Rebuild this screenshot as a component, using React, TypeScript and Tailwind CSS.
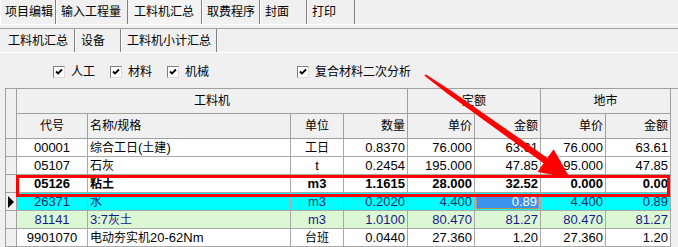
import React from "react";

const topTabs = [
  { t: "项目编辑", w: 56 },
  { t: "输入工程量", w: 72 },
  { t: "工料机汇总", w: 74, sel: true },
  { t: "取费程序", w: 58 },
  { t: "封面", w: 47 },
  { t: "打印", w: 48 },
];

const subTabs = [
  { t: "工料机汇总", w: 73, sel: true },
  { t: "设备", w: 46 },
  { t: "工料机小计汇总", w: 96 },
];

type Row = {
  code: string;
  name: string;
  unit: string;
  qty: string;
  dp: string;
  da: string;
  mp: string;
  ma: string;
  kind?: "bold" | "cyan" | "green";
};

const rows: Row[] = [
  { code: "00001", name: "综合工日(土建)", unit: "工日", qty: "0.8370", dp: "76.000", da: "63.61", mp: "76.000", ma: "63.61" },
  { code: "05107", name: "石灰", unit: "t", qty: "0.2454", dp: "195.000", da: "47.85", mp: "195.000", ma: "47.85" },
  { code: "05126", name: "粘土", unit: "m3", qty: "1.1615", dp: "28.000", da: "32.52", mp: "0.000", ma: "0.00", kind: "bold" },
  { code: "26371", name: "水", unit: "m3", qty: "0.2020", dp: "4.400", da: "0.89", mp: "4.400", ma: "0.89", kind: "cyan" },
  { code: "81141", name: "3:7灰土", unit: "m3", qty: "1.0100", dp: "80.470", da: "81.27", mp: "80.470", ma: "81.27", kind: "green" },
  { code: "9901070", name: "电动夯实机20-62Nm", unit: "台班", qty: "0.0440", dp: "27.360", da: "1.20", mp: "27.360", ma: "1.20" },
];

// CJK glyphs a bit smaller than the latin digits, like the old GDI font
function mix(s: string) {
  return s.split(/([\u4e00-\u9fff]+)/).map((p, i) =>
    /[\u4e00-\u9fff]/.test(p) ? (
      <span key={i} className="text-[12px]">
        {p}
      </span>
    ) : (
      <span key={i}>{p}</span>
    )
  );
}

function Check({ label, className = "" }: { label: string; className?: string }) {
  return (
    <div className={`flex items-center ${className}`}>
      <div className="w-[12px] h-[12px] bg-white border border-t-[#808080] border-l-[#808080] border-r-[#dcdcdc] border-b-[#dcdcdc] flex items-center justify-center">
        <svg width="8" height="8" viewBox="0 0 8 8">
          <path d="M1 3.5 L3 5.5 L7 1.5" stroke="#000" strokeWidth="1.8" fill="none" />
        </svg>
      </div>
      <span className="ml-[6px] text-[12px]">{label}</span>
    </div>
  );
}

function DataRow({ r }: { r: Row }) {
  const bg = r.kind === "cyan" ? "bg-[#00ffff]" : r.kind === "green" ? "bg-[#dcf7d4]" : "bg-white";
  const tc = r.kind === "cyan" ? "text-[#0c2a63]" : r.kind === "green" ? "text-[#1a1a8c]" : "text-black";
  const fw = r.kind === "bold" ? "font-bold" : "";
  const cell = `h-full border-r border-b border-[#a8a8a8] flex items-center ${bg}`;
  return (
    <div className={`flex h-[18px] ${tc} ${fw}`}>
      <div className="w-[11px] h-full border-r border-b border-[#a0a0a0] bg-[#f0f0f0] flex items-center">
        {r.kind === "cyan" && (
          <svg width="8" height="12" viewBox="0 0 8 12" className="ml-[1px]">
            <path d="M1 0 L7 6 L1 12 Z" fill="#000" />
          </svg>
        )}
      </div>
      <div className={`${cell} w-[71px] justify-center`}>{r.code}</div>
      <div className={`${cell} w-[203px] pl-[2px]`}>{mix(r.name)}</div>
      <div className={`${cell} w-[53px] justify-center`}>{mix(r.unit)}</div>
      <div className={`${cell} w-[64px] justify-end pr-[2px]`}>{r.qty}</div>
      <div className={`${cell} w-[67px] justify-end pr-[2px]`}>{r.dp}</div>
      {r.kind === "cyan" ? (
        <div className="h-full w-[66px] border-r border-b border-[#a8a8a8] bg-[#00ffff] p-[1px]">
          <div className="h-full w-full bg-[#3d92ec] border border-dotted border-[#d0a060] flex items-center justify-end pr-[1px] text-white">
            {r.da}
          </div>
        </div>
      ) : (
        <div className={`${cell} w-[66px] justify-end pr-[2px]`}>{r.da}</div>
      )}
      <div className={`${cell} w-[65px] justify-end pr-[2px]`}>{r.mp}</div>
      <div className={`${cell} w-[65px] justify-end pr-[2px]`}>{r.ma}</div>
      <div className="flex-1 h-full bg-[#f0f0f0]" />
    </div>
  );
}

export default function App() {
  const hd = "h-full border-r border-b border-[#a0a0a0] flex items-center bg-[#f0f0f0]";
  return (
    <div className="relative w-[678px] h-[247px] overflow-hidden bg-[#f0f0f0] text-[13px] text-black font-['Liberation_Sans','Noto_Sans_CJK_SC',sans-serif] leading-none select-none">
      {/* top tabs */}
      <div className="flex h-[25px] border-b border-white">
        {topTabs.map((t) => (
          <div
            key={t.t}
            style={{ width: t.w }}
            className={`h-full flex items-center text-[12px] border-r border-[#808080] border-l border-l-white ${
              t.sel ? "pl-[6px] bg-[#f4f4f4] border-l-0" : "pl-[4px]"
            }`}
          >
            {t.t}
          </div>
        ))}
      </div>
      <div className="h-[3px]" />
      {/* sub tabs */}
      <div className="flex h-[25px] border-t border-[#a0a0a0] border-b border-b-white pl-[2px]">
        {subTabs.map((t) => (
          <div
            key={t.t}
            style={{ width: t.w }}
            className={`h-full flex items-center text-[12px] border-r border-[#808080] ${t.sel ? "pl-[6px]" : "pl-[5px] border-l border-l-white"}`}
          >
            {t.t}
          </div>
        ))}
      </div>
      {/* filters */}
      <div className="h-[35px] flex items-center pl-[53px] pt-[2px]">
        <Check label="人工" />
        <Check label="材料" className="ml-[15px]" />
        <Check label="机械" className="ml-[15px]" />
        <Check label="复合材料二次分析" className="ml-[88px]" />
      </div>
      {/* grid */}
      <div className="ml-[5px] border-t border-l border-[#a0a0a0]">
        <div className="flex h-[50px]">
          <div className="w-[11px] h-full border-r border-b border-[#a0a0a0] bg-[#f0f0f0]" />
          <div className="flex flex-col">
            <div className="flex h-[25px]">
              <div className={`${hd} w-[391px] justify-center text-[12px]`}>工料机</div>
              <div className={`${hd} w-[133px] justify-center text-[12px]`}>定额</div>
              <div className={`${hd} w-[130px] justify-center text-[12px]`}>地市</div>
            </div>
            <div className="flex h-[25px] text-[12px]">
              <div className={`${hd} w-[71px] justify-center`}>代号</div>
              <div className={`${hd} w-[203px] pl-[2px]`}>名称/规格</div>
              <div className={`${hd} w-[53px] justify-center`}>单位</div>
              <div className={`${hd} w-[64px] justify-end pr-[2px]`}>数量</div>
              <div className={`${hd} w-[67px] justify-end pr-[2px]`}>单价</div>
              <div className={`${hd} w-[66px] justify-end pr-[2px]`}>金额</div>
              <div className={`${hd} w-[65px] justify-end pr-[2px]`}>单价</div>
              <div className={`${hd} w-[65px] justify-end pr-[2px]`}>金额</div>
            </div>
          </div>
          <div className="flex-1 h-full bg-[#f0f0f0]" />
        </div>
        {rows.map((r) => (
          <DataRow key={r.code} r={r} />
        ))}
      </div>
      {/* annotation overlay */}
      <svg className="absolute inset-0 pointer-events-none" width="678" height="247" viewBox="0 0 678 247">
        <rect x="17.5" y="176.5" width="651" height="19" fill="none" stroke="#ff0000" strokeWidth="3" />
        <polygon
          fill="#ff0000"
          points="425.5,74.3 450.8,90.5 547.4,158 553.6,149.2 570,178 537.4,172 543.6,163.2 448.2,94.3 424.5,75.7"
        />
      </svg>
    </div>
  );
}
